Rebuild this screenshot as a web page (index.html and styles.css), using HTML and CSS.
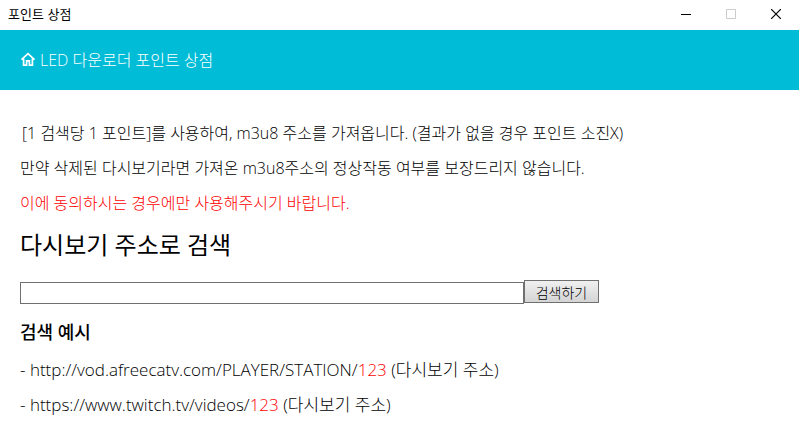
FILE: index.html
```
<!DOCTYPE html>
<html lang="ko">

<head>
  <meta charset="UTF-8">
  <meta name="viewport" content="width=device-width, initial-scale=1">
  <title>포인트 상점</title>
  <link rel="stylesheet" href="styles.css">
</head>

<body>
  <div class="titlebar">
    <span class="title">포인트 상점</span>
    <div class="win-buttons">
      <button type="button" aria-label="최소화">
        <svg width="10" height="10" viewBox="0 0 10 10"><path d="M0 5.5h10" stroke="#000"/></svg>
      </button>
      <button type="button" aria-label="최대화" disabled>
        <svg width="10" height="10" viewBox="0 0 10 10"><path d="M.5.5h9v9h-9z" fill="none" stroke="#ccc"/></svg>
      </button>
      <button type="button" aria-label="닫기">
        <svg width="10" height="10" viewBox="0 0 10 10"><path d="M0 0l10 10M10 0L0 10" stroke="#000" stroke-width="1.2"/></svg>
      </button>
    </div>
  </div>

  <header class="header">
    <svg class="home" width="16" height="16" viewBox="0 0 16 16" aria-hidden="true">
      <path d="M1.5 7.7L8 1.6l6.5 6.1M3.6 6.5v6.7h3V8.8h2.8v4.4h3V6.500" fill="none" stroke="#fff" stroke-width="1.7"/>
    </svg>
    <span>LED 다운로더 포인트 상점</span>
  </header>

  <main class="content">
    <p class="first">[1 검색당 1 포인트]를 사용하여, m3u8 주소를 가져옵니다. (결과가 없을 경우 포인트 소진X)</p>
    <p>만약 삭제된 다시보기라면 가져온 m3u8주소의 정상작동 여부를 보장드리지 않습니다.</p>
    <p class="red">이에 동의하시는 경우에만 사용해주시기 바랍니다.</p>

    <h2><label for="url">다시보기 주소로 검색</label></h2>
    <form class="search">
      <input type="text" id="url" name="url">
      <button type="button">검색하기</button>
    </form>

    <h3>검색 예시</h3>
    <div class="examples">
      <p>- http://vod.afreecatv.com/PLAYER/STATION/<span class="red">123</span> (다시보기 주소)</p>
      <p>- https://www.twitch.tv/videos/<span class="red">123</span> (다시보기 주소)</p>
    </div>
  </main>
</body>

</html>
```

FILE: styles.css
```
* {
  box-sizing: border-box;
}

body {
  margin: 0;
  background: #fff;
  color: #000;
  font-family: "Open Sans", "Noto Sans CJK KR", sans-serif;
  font-size: 16px;
  font-weight: 300;
  line-height: 19px;
}

.titlebar {
  display: flex;
  justify-content: space-between;
  height: 30px;
  padding-left: 8px;
}

.title {
  font-family: "Noto Sans CJK KR", sans-serif;
  font-size: 13px;
  font-weight: 400;
  line-height: 28px;
}

.win-buttons {
  display: flex;
  padding-right: 1px;
}

.win-buttons button {
  display: flex;
  align-items: center;
  justify-content: center;
  width: 45px;
  height: 28px;
  padding: 0;
  border: 0;
  background: none;
}

.header {
  display: flex;
  align-items: center;
  gap: 4px;
  height: 60px;
  padding: 0 20px;
  background: #00bcd7;
  color: #fff;
}

.content {
  padding: 34px 20px 16px;
}

p {
  margin: 0 0 16px;
}

.first {
  padding-left: 2px;
}

.red {
  color: #f00;
}

h2 {
  margin: 0;
  font-size: 24px;
  font-weight: 400;
  line-height: 32px;
}

h3 {
  margin: 16px 0;
  font-size: 18px;
  font-weight: 500;
  line-height: 24px;
}

.examples {
  font-size: 17px;
}

.search {
  display: flex;
  align-items: flex-start;
  margin-top: 19px;
}

.search input {
  flex: 0 1 504px;
  min-width: 0;
  height: 22px;
  margin: 2px 0 0;
  border: 1px solid #707070;
}

.search button {
  width: 75px;
  height: 23px;
  padding: 0;
  border: 1px solid #707070;
  background: linear-gradient(#f0f0f0, #d4d4d4);
  color: #000;
  font-family: "Noto Sans CJK KR", sans-serif;
  font-size: 14px;
  font-weight: 300;
  line-height: 20px;
}
```
